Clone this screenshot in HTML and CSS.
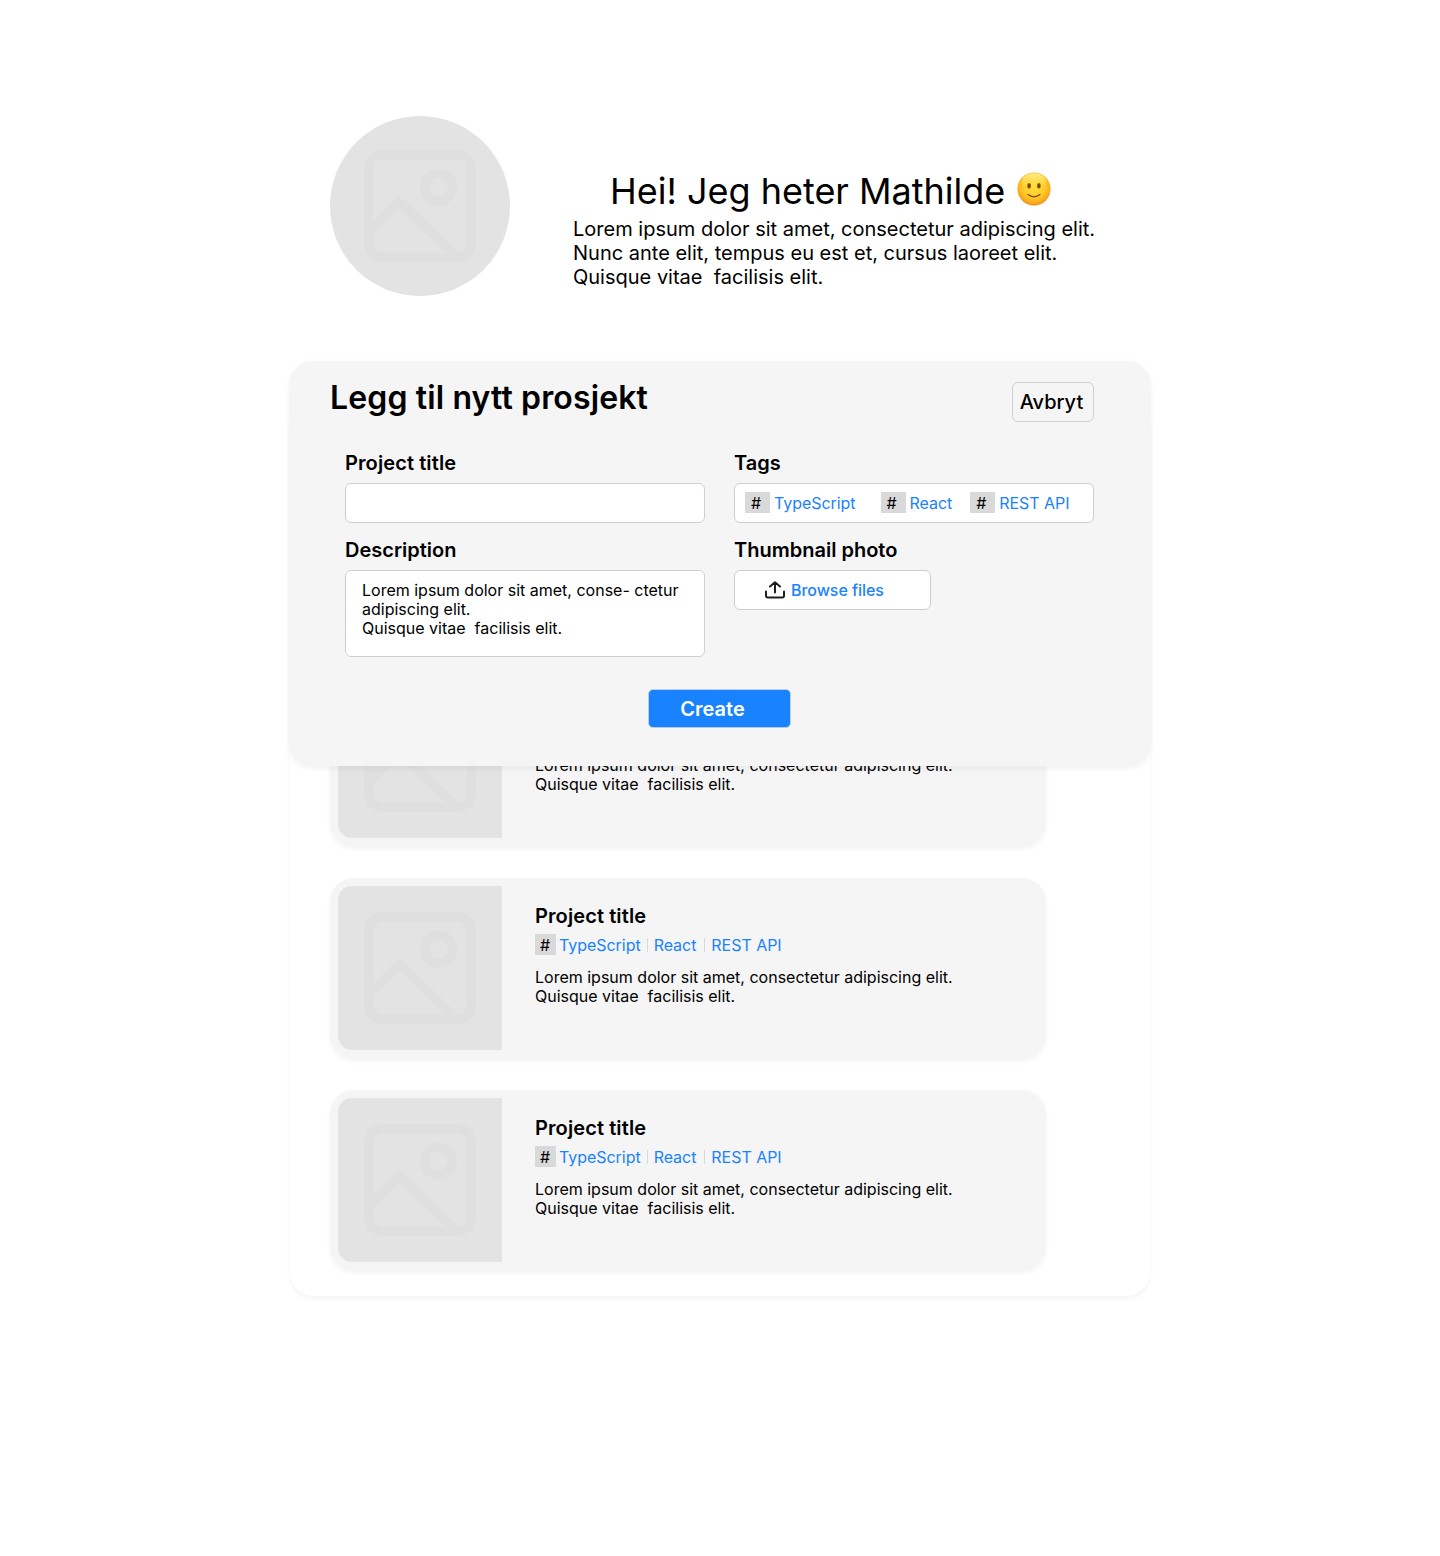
FILE: index.html
```html
<!DOCTYPE html>
<html lang="no">
<head>
<meta charset="utf-8">
<title>Mathilde – prosjekter</title>
<link rel="stylesheet" href="styles.css">
</head>
<body>
<svg class="defs" width="0" height="0" aria-hidden="true">
  <symbol id="picture" viewBox="0 0 112 112">
    <g fill="none" stroke="#dfdfdf" stroke-width="9.33" stroke-linejoin="round">
      <rect x="4.67" y="4.67" width="102.67" height="102.67" rx="14"/>
      <circle cx="74.6" cy="37.3" r="14"/>
      <path d="M4.67 82.2 35.6 52 93 107.33"/>
    </g>
  </symbol>
</svg>
<main class="page">
  <header class="intro">
    <div class="avatar"><svg class="picture"><use href="#picture"/></svg></div>
    <div class="intro-text">
      <h1><span>Hei! Jeg heter Mathilde</span>
        <svg class="smiley" viewBox="0 0 34 34">
          <defs>
            <radialGradient id="face" cx="50%" cy="42%" r="58%">
              <stop offset="0" stop-color="#ffdc3a"/><stop offset=".55" stop-color="#ffcd2c"/>
              <stop offset=".85" stop-color="#fbab1c"/><stop offset="1" stop-color="#ee8a1a"/>
            </radialGradient>
            <linearGradient id="shine" x2="0" y2="1">
              <stop offset="0" stop-color="#fff6a0" stop-opacity=".8"/><stop offset="1" stop-color="#ffe544" stop-opacity="0"/>
            </linearGradient>
          </defs>
          <circle cx="17" cy="17" r="16.6" fill="url(#face)"/>
          <ellipse cx="17" cy="9.5" rx="12.5" ry="8.2" fill="url(#shine)"/>
          <ellipse cx="12.1" cy="13.7" rx="1.8" ry="2.7" fill="#7a4806"/>
          <ellipse cx="21.9" cy="13.7" rx="1.8" ry="2.7" fill="#7a4806"/>
          <path d="M11 22.6q6 4.6 12 0" fill="none" stroke="#7a4806" stroke-width="1.2" stroke-linecap="round"/>
        </svg>
      </h1>
      <p>Lorem ipsum dolor sit amet, consectetur adipiscing elit.
Nunc ante elit, tempus eu est et, cursus laoreet elit.
Quisque vitae  facilisis elit.</p>
    </div>
  </header>

  <section class="projects">
    <article class="card">
      <div class="thumb"><svg class="picture"><use href="#picture"/></svg></div>
      <div class="card-body">
        <h3>Project title</h3>
        <div class="tags"><b class="hash">#</b><span>TypeScript</span><span>React</span><span>REST API</span></div>
        <p>Lorem ipsum dolor sit amet, consectetur adipiscing elit.
Quisque vitae  facilisis elit.</p>
      </div>
    </article>
    <article class="card">
      <div class="thumb"><svg class="picture"><use href="#picture"/></svg></div>
      <div class="card-body">
        <h3>Project title</h3>
        <div class="tags"><b class="hash">#</b><span>TypeScript</span><span>React</span><span>REST API</span></div>
        <p>Lorem ipsum dolor sit amet, consectetur adipiscing elit.
Quisque vitae  facilisis elit.</p>
      </div>
    </article>
    <article class="card">
      <div class="thumb"><svg class="picture"><use href="#picture"/></svg></div>
      <div class="card-body">
        <h3>Project title</h3>
        <div class="tags"><b class="hash">#</b><span>TypeScript</span><span>React</span><span>REST API</span></div>
        <p>Lorem ipsum dolor sit amet, consectetur adipiscing elit.
Quisque vitae  facilisis elit.</p>
      </div>
    </article>

    <form class="modal">
      <div class="modal-head">
        <h2>Legg til nytt prosjekt</h2>
        <button type="button" class="cancel">Avbryt</button>
      </div>
      <div class="fields">
        <div class="field">
          <label class="title-label">Project title</label>
          <div class="box"></div>
        </div>
        <div class="field">
          <label>Tags</label>
          <div class="box tag-box">
            <div class="tag tag-wide"><b class="hash">#</b>TypeScript</div>
            <div class="tag"><b class="hash">#</b>React</div>
            <div class="tag"><b class="hash">#</b>REST API</div>
          </div>
        </div>
        <div class="field">
          <label>Description</label>
          <div class="box description">Lorem ipsum dolor sit amet, conse- ctetur
adipiscing elit.
Quisque vitae  facilisis elit.</div>
        </div>
        <div class="field">
          <label>Thumbnail photo</label>
          <button type="button" class="box browse">
            <svg class="upload" viewBox="0 0 20 18" fill="none" stroke="#1e1e1e" stroke-width="2" stroke-linecap="round" stroke-linejoin="round">
              <path d="M1 10.5v4.3A1.7 1.7 0 0 0 2.7 16.5h14.6a1.7 1.7 0 0 0 1.7-1.7v-4.3M10 11.5V1.5M5 5.5l5-4.2 5 4.2"/>
            </svg>
            Browse files
          </button>
        </div>
      </div>
      <button type="button" class="create">Create</button>
    </form>
  </section>
</main>
</body>
</html>
```

FILE: styles.css
```css
* { box-sizing: border-box; }
body { margin: 0; background: #fff; color: #000; font-family: Inter, "Liberation Sans", sans-serif; }
h1, h2, h3, p { margin: 0; }
button { font: inherit; padding: 0; color: inherit; }
.defs { position: absolute; }
.page { width: 860px; min-height: 1556px; margin: 0 auto; padding-top: 116px; }
.picture { display: block; width: 112px; height: 112px; }

.intro { display: flex; gap: 63px; padding-left: 40px; }
.avatar { display: flex; align-items: center; justify-content: center; width: 180px; height: 180px; border-radius: 50%; background: #e3e3e3; }
.intro-text { padding-top: 53px; }
.intro-text h1 { display: flex; gap: 12px; height: 48px; padding-left: 37px; font-size: 36px; font-weight: 400; line-height: 44px; white-space: nowrap; }
.smiley { width: 34px; height: 34px; margin-top: 3px; }
.intro-text p { font-size: 20px; line-height: 24px; white-space: pre; }

.projects { position: relative; display: flex; flex-direction: column; gap: 32px; height: 896px; margin-top: 104px; padding: 266px 40px 0; border-radius: 24px; background: #fff; box-shadow: 0 4px 4px rgba(0, 0, 0, .03), 0 0 6px rgba(0, 0, 0, .02); }
.card { display: flex; gap: 33px; width: 716px; height: 180px; padding: 8px; border-radius: 24px; background: #f5f5f5; box-shadow: 0 4px 4px rgba(0, 0, 0, .03), 0 1px 6px rgba(0, 0, 0, .02); }
.thumb { display: flex; align-items: center; justify-content: center; width: 164px; height: 164px; border-radius: 14px 0 0 14px; background: #e3e3e3; }
.card-body { padding-top: 18px; }
.card-body h3, .title-label { letter-spacing: .1px; }
.card-body h3 { font-size: 20px; font-weight: 600; line-height: 24px; }
.card-body p { margin-top: 13px; font-size: 16px; line-height: 19px; white-space: pre; }
.tags { display: flex; align-items: center; margin-top: 6px; font-size: 16px; line-height: 21px; color: #1982ff; }
.tags span { display: flex; align-items: center; height: 21px; padding-top: 1px; letter-spacing: -.04px; }
.tags span + span::before { content: ""; width: 1px; height: 14px; margin: -1px 6px 0; background: #d9d9d9; }
.tags span:last-child::before { margin-left: 8px; }
.hash { width: 21px; height: 21px; margin-right: 3px; padding: 1px 1px 0 0; background: #d9d9d9; color: #000; font-weight: 400; text-align: center; }

.modal { position: absolute; top: -39px; left: -1px; width: 862px; height: 405px; padding: 21px 57px 0 41px; border-radius: 24px; background: #f5f5f5; box-shadow: 0 4px 4px rgba(0, 0, 0, .03), 0 0 6px rgba(0, 0, 0, .02); }
.modal-head { display: flex; justify-content: space-between; }
.modal h2 { font-size: 32px; font-weight: 600; line-height: 32px; letter-spacing: .13px; }
.cancel { width: 82px; height: 40px; padding-right: 3px; border: 1px solid #cfcfcf; border-radius: 6px; background: none; font-size: 20px; font-weight: 500; }
.fields { display: grid; grid-template-columns: 360px 360px; column-gap: 29px; row-gap: 15px; padding: 29px 0 0 15px; }
.field label { display: block; font-size: 20px; font-weight: 600; line-height: 24px; }
.box { height: 40px; margin-top: 8px; border: 1px solid #cfcfcf; border-radius: 6px; background: #fff; }
.tag-box { display: flex; align-items: flex-start; gap: 18px; padding: 8px 0 0 10px; font-size: 16px; line-height: 22px; letter-spacing: -.05px; color: #1982ff; }
.tag { display: flex; }
.tag-wide { margin-right: 7px; }
.tag .hash { width: 25px; margin-right: 4px; padding: 0 3px 0 0; }
.description { height: 87px; padding: 10px 16px; font-size: 16px; line-height: 19px; white-space: pre; }
.browse { display: flex; align-items: center; gap: 6px; width: 197px; padding-left: 30px; font-size: 16px; font-weight: 500; letter-spacing: -.05px; color: #1982ff; }
.upload { width: 20px; height: 18px; }
.create { display: block; width: 143px; height: 39px; margin: 32px 0 0 318px; padding-right: 14px; border: 1px solid #b9cfe8; border-radius: 5px; background: #1982ff; color: #fff; font-size: 20px; font-weight: 600; }
```
